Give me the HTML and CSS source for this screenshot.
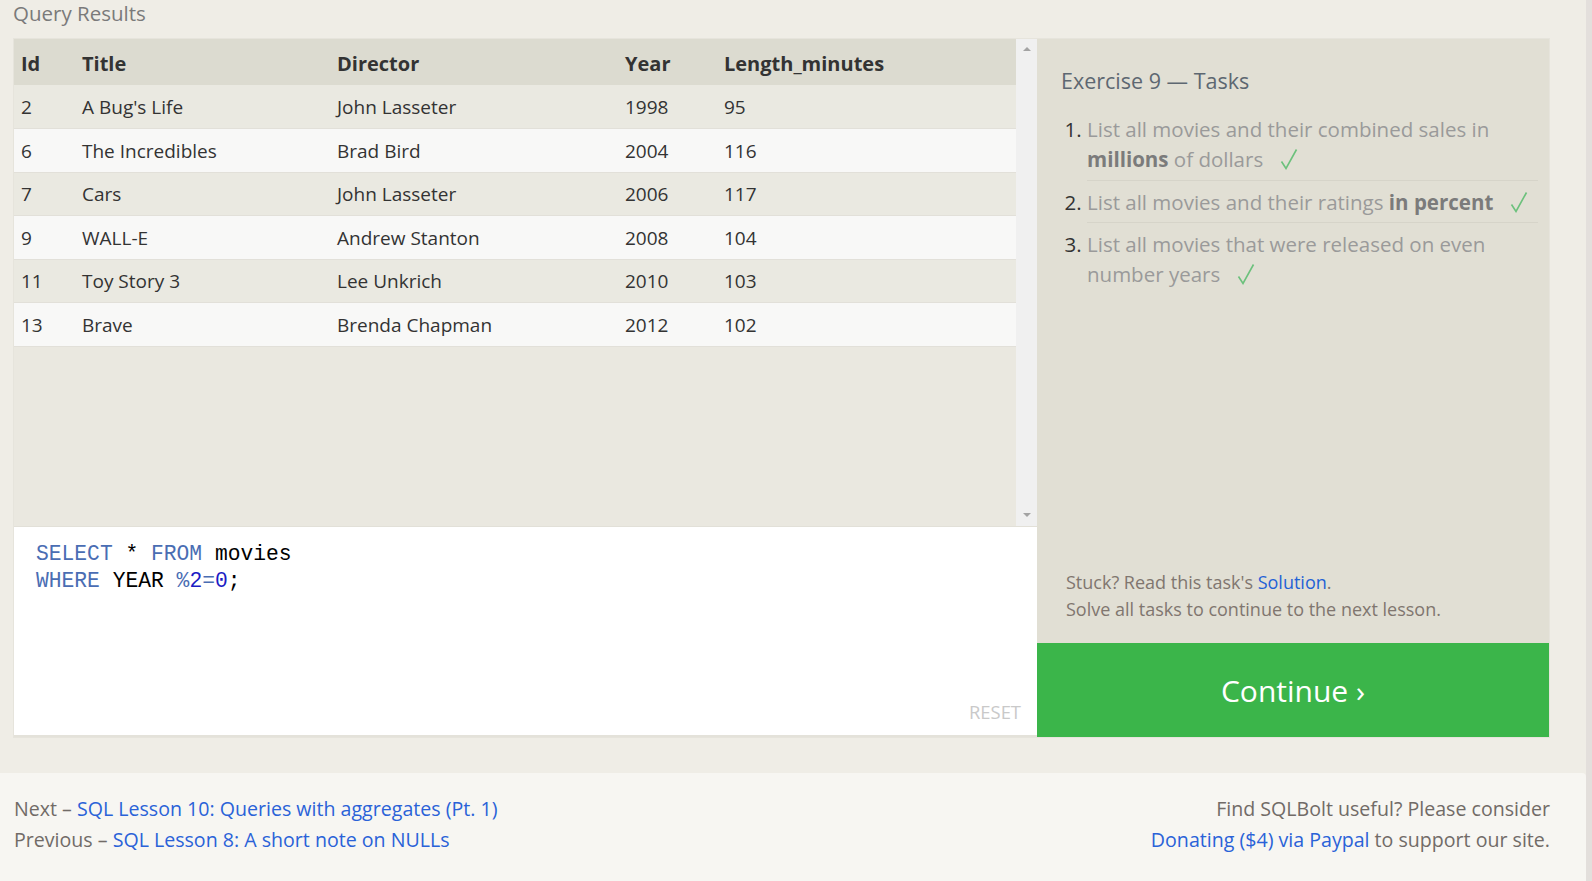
FILE: index.html
```html
<!DOCTYPE html>
<html>
<head>
<meta charset="utf-8">
<title>SQLBolt - Exercise 9</title>
<link rel="stylesheet" href="styles.css">
</head>
<body>
<div class="page">
  <section class="main">
    <h2 class="section-title">Query Results</h2>
    <div class="exercise">
      <div class="left">
        <div class="results">
          <div class="table-wrap">
            <table class="results-table">
              <thead>
                <tr><th class="c-id">Id</th><th class="c-title">Title</th><th class="c-dir">Director</th><th class="c-year">Year</th><th>Length_minutes</th></tr>
              </thead>
              <tbody>
                <tr><td>2</td><td>A Bug's Life</td><td>John Lasseter</td><td>1998</td><td>95</td></tr>
                <tr><td>6</td><td>The Incredibles</td><td>Brad Bird</td><td>2004</td><td>116</td></tr>
                <tr><td>7</td><td>Cars</td><td>John Lasseter</td><td>2006</td><td>117</td></tr>
                <tr><td>9</td><td>WALL-E</td><td>Andrew Stanton</td><td>2008</td><td>104</td></tr>
                <tr><td>11</td><td>Toy Story 3</td><td>Lee Unkrich</td><td>2010</td><td>103</td></tr>
                <tr><td>13</td><td>Brave</td><td>Brenda Chapman</td><td>2012</td><td>102</td></tr>
              </tbody>
            </table>
          </div>
          <div class="scrollbar">
            <span class="arrow up"></span>
            <span class="arrow down"></span>
          </div>
        </div>
        <div class="editor">
          <pre class="code"><span class="kw">SELECT</span> * <span class="kw">FROM</span> movies
<span class="kw">WHERE</span> YEAR <span class="op">%</span><span class="num">2</span><span class="op">=</span><span class="num">0</span>;</pre>
          <div class="reset">RESET</div>
        </div>
      </div>
      <div class="right">
        <div class="tasks">
          <h3 class="tasks-title">Exercise 9 — Tasks</h3>
          <ol class="task-list">
            <li><span class="t">List all movies and their combined sales in <b>millions</b> of dollars</span><svg class="check" viewBox="0 0 18 22" width="18" height="22"><path d="M1.5 13.5 L6 20.5 L16.5 1.5" fill="none" stroke="#6cc17c" stroke-width="1.6"/></svg></li>
            <li><span class="t">List all movies and their ratings <b>in percent</b></span><svg class="check" viewBox="0 0 18 22" width="18" height="22"><path d="M1.5 13.5 L6 20.5 L16.5 1.5" fill="none" stroke="#6cc17c" stroke-width="1.6"/></svg></li>
            <li><span class="t">List all movies that were released on even number years</span><svg class="check" viewBox="0 0 18 22" width="18" height="22"><path d="M1.5 13.5 L6 20.5 L16.5 1.5" fill="none" stroke="#6cc17c" stroke-width="1.6"/></svg></li>
          </ol>
          <div class="help">
            <div>Stuck? Read this task's <a href="#">Solution</a>.</div>
            <div>Solve all tasks to continue to the next lesson.</div>
          </div>
        </div>
        <a class="continue" href="#">Continue ›</a>
      </div>
    </div>
  </section>
  <footer class="footer">
    <div class="nav">
      <div>Next – <a href="#">SQL Lesson 10: Queries with aggregates (Pt. 1)</a></div>
      <div>Previous – <a href="#">SQL Lesson 8: A short note on NULLs</a></div>
    </div>
    <div class="donate">
      <div>Find SQLBolt useful? Please consider</div>
      <div><a href="#">Donating ($4) via Paypal</a> to support our site.</div>
    </div>
  </footer>
</div>
</body>
</html>
```
FILE: styles.css
```css
html {
  background: #e3dfdc;
}
body {
  margin: 0;
  font-family: "Open Sans", "Noto Sans", sans-serif;
  color: #333;
}
.page {
  width: 1586px;
  height: 881px;
  background: #efede6;
  display: flex;
  flex-direction: column;
  overflow: hidden;
}
.main {
  padding: 0 36px 0 13px;
  height: 773px;
  box-sizing: border-box;
}
.section-title {
  margin: 0;
  height: 38px;
  font-weight: 400;
  font-size: 20.5px;
  line-height: 26px;
  color: #7a7a7a;
}
.exercise {
  display: grid;
  grid-template-columns: 1023px 512px;
  border: 1px solid #e6e4dc;
  height: 700px;
  box-sizing: border-box;
}
.left {
  display: flex;
  flex-direction: column;
}
.results {
  display: flex;
  height: 488px;
  box-sizing: border-box;
  background: #eae8e0;
  border-bottom: 1px solid #e2e0d8;
}
.table-wrap {
  flex: 1;
}
.results-table {
  width: 100%;
  border-collapse: collapse;
  font-size: 19px;
}
.results-table th {
  background: #dcdbd0;
  text-align: left;
  font-weight: 700;
  font-size: 20px;
  height: 46px;
  box-sizing: border-box;
  padding: 3px 0 0 7px;
  color: #333;
}
.results-table td {
  height: 43.5px;
  box-sizing: border-box;
  padding: 1px 0 0 7px;
  border-bottom: 1px solid #e2e0d9;
}
.results-table tbody tr:nth-child(odd) td {
  background: #eae9e1;
}
.results-table tbody tr:nth-child(even) td {
  background: #f8f8f7;
}
.c-id { width: 61px; }
.c-title { width: 255px; }
.c-dir { width: 288px; }
.c-year { width: 99px; }
.scrollbar {
  width: 21px;
  background: #f0f0f0;
  display: flex;
  flex-direction: column;
  justify-content: space-between;
  align-items: center;
  padding: 8px 0 9px;
  box-sizing: border-box;
}
.arrow {
  width: 0;
  height: 0;
  border-left: 4px solid transparent;
  border-right: 4px solid transparent;
}
.arrow.up { border-bottom: 4px solid #a3a3a3; }
.arrow.down { border-top: 4px solid #a3a3a3; }
.editor {
  flex: 1;
  background: #fff;
  border-bottom: 2px solid #e4e2da;
  display: flex;
  flex-direction: column;
  justify-content: space-between;
}
.code {
  margin: 0;
  padding: 14px 0 0 22px;
  font-family: "Liberation Mono", "DejaVu Sans Mono", monospace;
  font-size: 21.3px;
  line-height: 27px;
  color: #000;
}
.kw { color: #4a6db3; }
.op { color: #4a6db3; }
.num { color: #1c1cc4; }
.reset {
  align-self: flex-end;
  margin: 0 16px 11px 0;
  font-size: 18.4px;
  color: #c9c9c9;
}
.right {
  display: flex;
  flex-direction: column;
  background: #e1dfd4;
}
.tasks {
  flex: 1;
  display: flex;
  flex-direction: column;
  padding: 0 11px 0 24px;
}
.tasks-title {
  margin: 27px 0 0;
  font-weight: 400;
  font-size: 21.5px;
  line-height: 30px;
  color: #5d6771;
}
.task-list {
  margin: 12px 0 0;
  padding: 0 0 0 26px;
  font-size: 20.5px;
  line-height: 30.3px;
  color: #333;
}
.task-list li {
  padding: 6px 0 5px;
  border-bottom: 1px solid #d6d4c9;
}
.task-list li:last-child {
  border-bottom: none;
}
.task-list .t {
  color: #9a9a9a;
}
.task-list b {
  color: #7b7b7b;
}
.check {
  margin-left: 17px;
  vertical-align: -3px;
}
.help {
  margin-top: auto;
  padding: 0 0 20px 5px;
  font-size: 18px;
  line-height: 27px;
  color: #80766f;
}
.help a {
  color: #1f62d6;
  text-decoration: none;
}
.continue {
  display: flex;
  align-items: center;
  justify-content: center;
  height: 94px;
  background: #3bb54a;
  color: #fff;
  font-size: 30px;
  text-decoration: none;
}
.footer {
  flex: 1;
  background: #f7f6f2;
  border-top-right-radius: 4px;
  display: flex;
  justify-content: space-between;
  padding: 21px 36px 0 14px;
  font-size: 19.6px;
  line-height: 30.5px;
  color: #716b67;
}
.footer a {
  color: #2a62d8;
  text-decoration: none;
}
.donate {
  text-align: right;
}
```
